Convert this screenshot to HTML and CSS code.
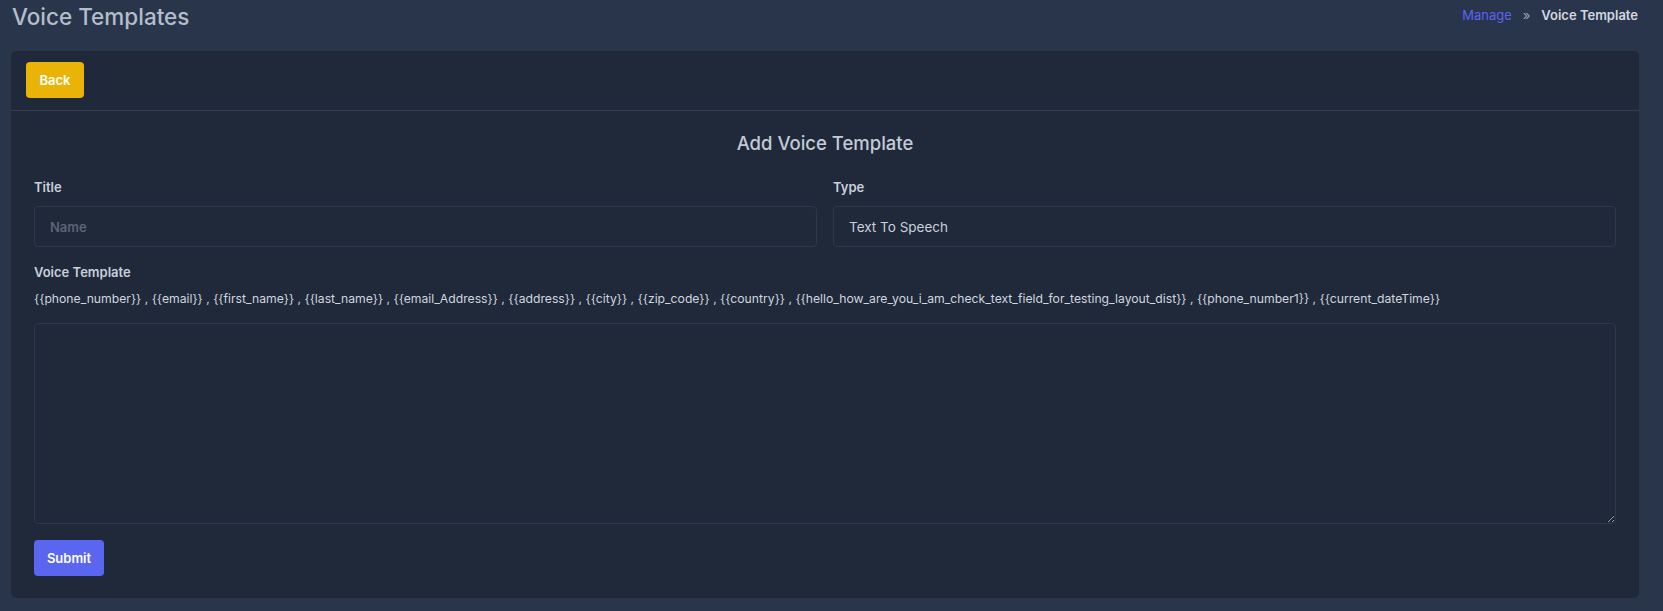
FILE: index.html
```html
<!DOCTYPE html>
<html lang="en">
<head>
<meta charset="utf-8">
<title>Voice Templates</title>
<link rel="stylesheet" href="styles.css">
</head>
<body>
<div class="page">
  <header class="page-header">
    <h1 class="page-title">Voice Templates</h1>
    <nav class="breadcrumb">
      <a class="crumb-link" href="#">Manage</a>
      <span class="crumb-sep">»</span>
      <span class="crumb-current">Voice Template</span>
    </nav>
  </header>

  <section class="card">
    <div class="card-head">
      <button class="btn btn-back" type="button">Back</button>
    </div>
    <div class="card-body">
      <h2 class="form-title">Add Voice Template</h2>
      <div class="row">
        <div class="field">
          <label class="label">Title</label>
          <input class="input" type="text" placeholder="Name">
        </div>
        <div class="field">
          <label class="label">Type</label>
          <div class="input input-static">Text To Speech</div>
        </div>
      </div>
      <label class="label label-voice">Voice Template</label>
      <p class="vars">{{phone_number}} , {{email}} , {{first_name}} , {{last_name}} , {{email_Address}} , {{address}} , {{city}} , {{zip_code}} , {{country}} , {{hello_how_are_you_i_am_check_text_field_for_testing_layout_dist}} , {{phone_number1}} , {{current_dateTime}}</p>
      <textarea class="textarea"></textarea>
      <button class="btn btn-submit" type="button">Submit</button>
    </div>
  </section>
</div>
</body>
</html>
```

FILE: styles.css
```css
* { box-sizing: border-box; }

html, body {
  margin: 0;
  padding: 0;
  background: #29354a;
  font-family: Inter, "Noto Sans", "Liberation Sans", sans-serif;
  color: #c9d0da;
}

.page {
  padding: 0 24px 13px 11px;
}

.page-header {
  display: flex;
  justify-content: space-between;
  align-items: flex-start;
  height: 32px;
  margin-bottom: 19px;
}

.page-title {
  margin: 1px 0 0 1px;
  font-size: 22.5px;
  line-height: 32px;
  font-weight: 500;
  color: #b3bdcc;
}

.breadcrumb {
  margin-top: 5px;
  margin-right: 1px;
  font-size: 13px;
  line-height: 20px;
  display: flex;
  gap: 11px;
}

.crumb-link {
  color: #5b64f3;
  text-decoration: none;
}

.crumb-sep {
  color: #9aa3b2;
}

.crumb-current {
  color: #d3d8e0;
  font-weight: 600;
}

.card {
  background: #1f293a;
  border-radius: 5px;
}

.card-head {
  padding: 11px 15px 12px 15px;
  border-bottom: 1px solid #343f52;
}

.btn {
  border: none;
  border-radius: 4px;
  color: #ffffff;
  font-family: inherit;
  font-size: 13px;
  font-weight: 600;
  height: 36px;
  cursor: pointer;
}

.btn-back {
  background: #eab308;
  width: 58px;
  display: block;
}

.card-body {
  padding: 18px 23px 22px 23px;
}

.form-title {
  margin: 0 0 20px 0;
  text-align: center;
  font-size: 18.5px;
  line-height: 28px;
  font-weight: 500;
  color: #c3cbd6;
}

.row {
  display: grid;
  grid-template-columns: 1fr 1fr;
  gap: 16px;
}

.field {
  display: flex;
  flex-direction: column;
}

.label {
  display: block;
  font-size: 13px;
  line-height: 20px;
  font-weight: 600;
  color: #c9d0da;
  margin-bottom: 9px;
}

.input {
  height: 41px;
  background: #1f293a;
  border: 1px solid #2d384a;
  border-radius: 4px;
  padding: 0 15px;
  font-family: inherit;
  font-size: 13px;
  color: #c9d0da;
  outline: none;
}

.input::placeholder {
  color: #5b6577;
  font-weight: 600;
}

.input-static {
  display: flex;
  align-items: center;
  font-size: 13.5px;
}

.label-voice {
  margin-top: 15px;
  margin-bottom: 7px;
}

.vars {
  margin: 0 0 14px 0;
  font-size: 12.2px;
  line-height: 20px;
  color: #d0d6df;
}

.textarea {
  display: block;
  width: 100%;
  height: 201px;
  background: #1f293a;
  border: 1px solid #2d384a;
  border-radius: 4px;
  color: #c9d0da;
  font-family: inherit;
  font-size: 13px;
  padding: 10px 15px;
  outline: none;
  margin: 0 0 16px 0;
}

.btn-submit {
  background: #5b66f0;
  width: 70px;
  display: block;
}
```
